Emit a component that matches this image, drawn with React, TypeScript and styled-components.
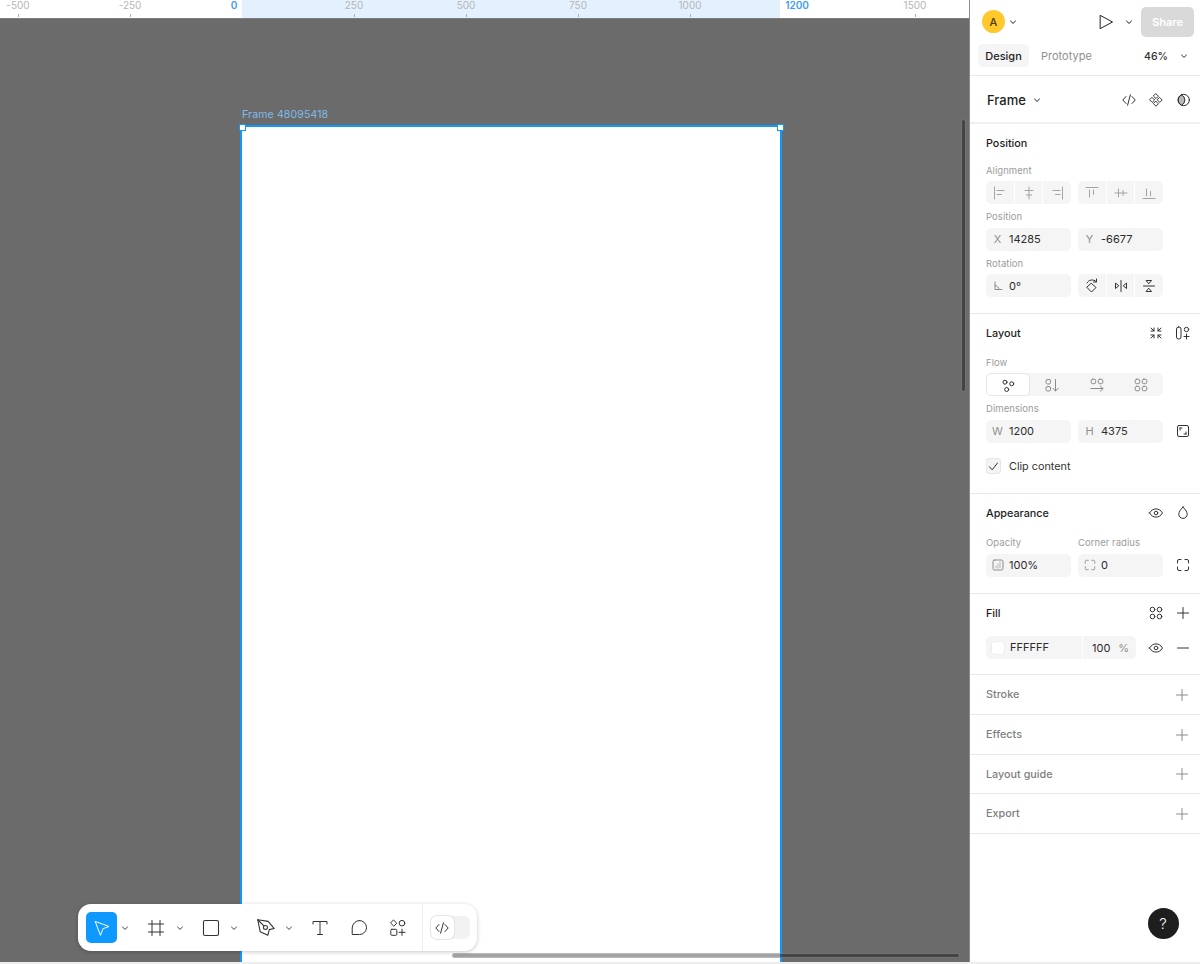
import type { ReactNode } from "react";
import styled, { createGlobalStyle } from "styled-components";

const GlobalStyle = createGlobalStyle`
  html, body {
    margin: 0;
    padding: 0;
    background: #eeeeee;
    font-family: Inter, "Liberation Sans", sans-serif;
    overflow: hidden;
  }
  * {
    box-sizing: border-box;
  }
`;

const Shell = styled.div`
  width: 1200px;
  height: 964px;
  display: flex;
  flex-direction: column;
  background: #eeeeee;
`;

const Main = styled.div`
  position: relative;
  flex: none;
  height: 962px;
  display: flex;
`;

const Workspace = styled.div`
  width: 970px;
  display: flex;
  flex-direction: column;
  border-right: 1px solid #8c8c8c;
`;

const Ruler = styled.div`
  position: relative;
  flex: none;
  height: 18px;
  background: #ffffff;
`;

const RulerBand = styled.div`
  position: absolute;
  left: 242px;
  top: 0;
  bottom: 0;
  width: 538px;
  background: #e3f1fe;
`;

const RulerLabel = styled.span<{ $x: number; $active?: boolean }>`
  position: absolute;
  left: ${(p) => p.$x}px;
  top: 0;
  transform: translateX(-50%);
  font-size: 10px;
  line-height: 11px;
  font-weight: ${(p) => (p.$active ? 600 : 400)};
  color: ${(p) => (p.$active ? "#3d9df0" : "#b5b5b5")};
`;

const RulerTick = styled.i<{ $x: number }>`
  position: absolute;
  left: ${(p) => p.$x}px;
  top: 14px;
  width: 1px;
  height: 3px;
  background: #b0b0b0;
`;

const Canvas = styled.div`
  position: relative;
  flex: 1;
  overflow: hidden;
  background: #6b6b6b;
  box-shadow: inset 0 1px 0 #7d7d7d;
`;

const FrameName = styled.div`
  position: absolute;
  left: 242px;
  top: 90px;
  font-size: 10.5px;
  line-height: 14px;
  letter-spacing: 0.15px;
  color: #7fbcec;
`;

const FrameBox = styled.div`
  position: absolute;
  left: 240px;
  top: 107px;
  width: 542px;
  height: 900px;
  background: #ffffff;
  border: 2px solid #0d99ff;
`;

const Handle = styled.i<{ $right?: boolean }>`
  position: absolute;
  top: -3px;
  ${(p) => (p.$right ? "right: -4px;" : "left: -3px;")}
  width: 7px;
  height: 7px;
  background: #ffffff;
  border: 1px solid #0d99ff;
`;

const ScrollV = styled.div`
  position: absolute;
  left: 961px;
  top: 101px;
  width: 5px;
  height: 273px;
  border-radius: 3px;
  background: rgba(0, 0, 0, 0.36);
  border: 1px solid rgba(255, 255, 255, 0.25);
`;

const ScrollH = styled.div`
  position: absolute;
  left: 452px;
  top: 935px;
  width: 508px;
  height: 5px;
  border-radius: 3px;
  background: rgba(0, 0, 0, 0.36);
  border: 1px solid rgba(255, 255, 255, 0.25);
`;

const Toolbar = styled.div`
  position: absolute;
  left: 78px;
  top: 886px;
  width: 399px;
  height: 47px;
  display: flex;
  align-items: center;
  padding-left: 8px;
  background: #ffffff;
  border-radius: 13px;
  box-shadow: 0 1px 4px rgba(0, 0, 0, 0.22);
`;

const ToolButton = styled.div<{ $active?: boolean }>`
  flex: none;
  width: 31px;
  height: 31px;
  display: flex;
  align-items: center;
  justify-content: center;
  border-radius: 5px;
  color: ${(p) => (p.$active ? "#ffffff" : "#333333")};
  background: ${(p) => (p.$active ? "#0d99ff" : "transparent")};
`;

const ToolCaret = styled.div`
  flex: none;
  width: 16px;
  margin-right: 7.7px;
  display: flex;
  justify-content: center;
  color: #444444;
`;

const ToolGap = styled.div`
  flex: none;
  width: 8px;
`;

const ToolDivider = styled.div`
  flex: none;
  align-self: stretch;
  width: 1px;
  margin: 0 8px;
  background: #ececec;
`;

const CodeToggle = styled.div`
  flex: none;
  width: 39px;
  height: 23px;
  border-radius: 6px;
  background: #f2f2f2;
`;

const CodeKnob = styled.div`
  width: 23px;
  height: 23px;
  display: flex;
  align-items: center;
  justify-content: center;
  border-radius: 6px;
  background: #ffffff;
  color: #333333;
  box-shadow: 0 0 0 1px #e4e4e4;
`;

const Panel = styled.aside`
  width: 230px;
  display: flex;
  flex-direction: column;
  background: #ffffff;
  color: #1e1e1e;
`;

const Header = styled.div`
  flex: none;
  height: 76px;
  padding: 6px 6px 0 8px;
  border-bottom: 1px solid #e9e9e9;
`;

const HeaderTop = styled.div`
  height: 31px;
  display: flex;
  align-items: center;
`;

const Avatar = styled.div`
  width: 23px;
  height: 23px;
  margin-left: 4px;
  display: flex;
  align-items: center;
  justify-content: center;
  border-radius: 50%;
  background: #ffc82c;
  font-size: 11px;
  font-weight: 500;
  color: #4a3c08;
`;

const AvatarCaret = styled.div`
  margin-left: 4px;
  display: flex;
`;

const PlayGroup = styled.div`
  margin-left: auto;
  display: flex;
  align-items: center;
  gap: 11px;
  margin-right: 8px;
`;

const ShareButton = styled.div`
  width: 53px;
  height: 30px;
  display: flex;
  align-items: center;
  justify-content: center;
  border-radius: 5px;
  background: #d9d9d9;
  color: #ffffff;
  font-size: 11px;
  font-weight: 600;
`;

const TabRow = styled.div`
  height: 23px;
  margin-top: 7px;
  display: flex;
  align-items: center;
  font-size: 11px;
`;

const Tab = styled.div<{ $active?: boolean }>`
  height: 23px;
  width: ${(p) => (p.$active ? "51px" : "auto")};
  margin-left: ${(p) => (p.$active ? "0" : "12px")};
  display: flex;
  align-items: center;
  justify-content: center;
  border-radius: 5px;
  font-weight: ${(p) => (p.$active ? 500 : 400)};
  color: ${(p) => (p.$active ? "#1e1e1e" : "#8f8f8f")};
  background: ${(p) => (p.$active ? "#f5f5f5" : "transparent")};
`;

const Zoom = styled.div`
  margin-left: auto;
  display: flex;
  align-items: center;
  gap: 12px;
  margin-right: 6px;
  font-size: 10.5px;
  line-height: 15px;
  padding-top: 1px;
  font-weight: 500;
  color: #333333;
`;

const Section = styled.section<{ $h: number; $thick?: boolean }>`
  flex: none;
  height: ${(p) => p.$h}px;
  padding: 0 9px 0 16px;
  border-bottom: ${(p) => (p.$thick ? "2px solid #f0f0f0" : "1px solid #e9e9e9")};
`;

const FrameHead = styled.div`
  height: 47px;
  display: flex;
  align-items: center;
  font-size: 13px;
  font-weight: 500;
  padding-left: 1px;
`;

const FrameCaret = styled.div`
  margin-left: 7px;
  display: flex;
`;

const HeadIcons = styled.div`
  margin-left: auto;
  display: flex;
  align-items: center;
  gap: 11px;
  color: #333333;
`;

const SectionHead = styled.div<{ $h: number }>`
  height: ${(p) => p.$h}px;
  padding-top: 11px;
  display: flex;
  align-items: flex-start;
  justify-content: space-between;
  font-size: 10.8px;
  line-height: 17px;
  font-weight: 500;
`;

const HeadActions = styled.div`
  display: flex;
  align-items: center;
  gap: 11px;
  height: 16px;
  color: #333333;
`;

const FieldGrid = styled.div`
  display: grid;
  grid-template-columns: 85px 85px 21px;
  column-gap: 7px;
`;

const FieldLabel = styled.div<{ $col?: number }>`
  grid-column: ${(p) => p.$col ?? 1} / span ${(p) => (p.$col ? 1 : 3)};
  height: 23.5px;
  padding-top: 6px;
  font-size: 9.5px;
  line-height: 14px;
  letter-spacing: 0.05px;
  white-space: nowrap;
  color: #9b9b9b;
`;

const Field = styled.div`
  height: 23px;
  display: flex;
  align-items: center;
  border-radius: 5px;
  background: #f5f5f5;
  font-size: 11px;
  color: #2c2c2c;
`;

const FieldPrefix = styled.span`
  flex: none;
  width: 23px;
  display: flex;
  align-items: center;
  justify-content: center;
  font-size: 11px;
  color: #8f8f8f;
`;

const ButtonGroup = styled.div`
  height: 23px;
  display: flex;
  gap: 1px;
  border-radius: 5px;
  overflow: hidden;
`;

const GroupCell = styled.div<{ $dim?: boolean }>`
  flex: 1;
  display: flex;
  align-items: center;
  justify-content: center;
  background: #f5f5f5;
  color: ${(p) => (p.$dim ? "#a3a3a3" : "#333333")};
`;

const Flow = styled.div`
  grid-column: 1 / span 2;
  height: 23px;
  display: grid;
  grid-template-columns: repeat(4, 1fr);
  border-radius: 5px;
  background: #f5f5f5;
`;

const FlowCell = styled.div<{ $active?: boolean }>`
  display: flex;
  align-items: center;
  justify-content: center;
  border-radius: 5px;
  color: ${(p) => (p.$active ? "#333333" : "#8a8a8a")};
  background: ${(p) => (p.$active ? "#ffffff" : "transparent")};
  box-shadow: ${(p) => (p.$active ? "inset 0 0 0 1px #e6e6e6" : "none")};
`;

const SideIcon = styled.div`
  height: 23px;
  padding-right: 1px;
  display: flex;
  align-items: center;
  justify-content: flex-end;
  color: #333333;
`;

const CheckRow = styled.div`
  margin-top: 15.5px;
  display: flex;
  align-items: center;
  gap: 8px;
  font-size: 10.8px;
  color: #333333;
`;

const CheckBox = styled.div`
  width: 15px;
  height: 16px;
  display: flex;
  align-items: center;
  justify-content: center;
  border-radius: 4px;
  background: #f5f5f5;
  box-shadow: inset 0 0 0 1px #e6e6e6;
  color: #333333;
`;

const FillGrid = styled.div`
  display: grid;
  grid-template-columns: 150px 16px 16px;
  column-gap: 11.5px;
  align-items: center;
  margin-top: 8.5px;
`;

const Swatch = styled.i`
  flex: none;
  width: 12px;
  height: 12px;
  margin: 0 6px;
  border-radius: 2px;
  background: #ffffff;
  box-shadow: 0 0 0 0.5px #e6e6e6;
`;

const FillHex = styled.span`
  width: 73px;
  height: 23px;
  line-height: 23px;
  border-right: 1px solid #ffffff;
`;

const FillAlpha = styled.span`
  margin-left: 9px;
`;

const FillUnit = styled.span`
  margin-left: auto;
  margin-right: 7px;
  color: #8f8f8f;
`;

const FillAction = styled.div`
  display: flex;
  justify-content: center;
  color: #333333;
`;

const CollapsedRow = styled.section<{ $h: number }>`
  flex: none;
  height: ${(p) => p.$h}px;
  padding: 0 10px 0 16px;
  display: flex;
  align-items: center;
  justify-content: space-between;
  border-bottom: 1px solid #e9e9e9;
  font-size: 10.8px;
  font-weight: 500;
  color: #808080;
`;

const HelpButton = styled.div`
  position: absolute;
  left: 1147.5px;
  top: 907.5px;
  width: 31px;
  height: 31px;
  display: flex;
  align-items: center;
  justify-content: center;
  border-radius: 50%;
  background: #1e1e1e;
  color: #ffffff;
  font-size: 15px;
  font-weight: 300;
`;

type IconProps = { size?: number; vb?: number; children: ReactNode; sw?: number };

const Icon = ({ size = 16, vb = 16, sw = 1, children }: IconProps) => (
  <svg
    width={size}
    height={size}
    viewBox={`0 0 ${vb} ${vb}`}
    fill="none"
    stroke="currentColor"
    strokeWidth={sw}
    strokeLinecap="round"
    strokeLinejoin="round"
  >
    {children}
  </svg>
);

const Caret = () => (
  <Icon size={8} vb={8}>
    <path d="M1.5 3l2.5 2.4L6.5 3" />
  </Icon>
);

const CodeGlyph = () => (
  <Icon size={16}>
    <path d="M5 4.5L1.8 8 5 11.5M11 4.5L14.2 8 11 11.5M9.4 2.8L6.6 13.2" />
  </Icon>
);

const Plus = ({ gray }: { gray?: boolean }) => (
  <Icon size={16}>
    <path d="M8 2.5v11M2.5 8h11" stroke={gray ? "#8a8a8a" : "currentColor"} />
  </Icon>
);

const Eye = () => (
  <Icon size={16}>
    <path d="M1.5 8C3.2 5.2 5.4 3.9 8 3.9s4.8 1.3 6.5 4.1c-1.7 2.8-3.9 4.1-6.5 4.1S3.2 10.8 1.5 8z" />
    <circle cx="8" cy="8" r="1.8" />
  </Icon>
);

const cornersPath =
  "M1.5 5V3a1.5 1.5 0 0 1 1.5-1.5h2M9 1.5h2A1.5 1.5 0 0 1 12.5 3v2M12.5 9v2a1.5 1.5 0 0 1-1.5 1.5H9M5 12.5H3A1.5 1.5 0 0 1 1.5 11V9";

const FourDots = () => (
  <Icon size={16}>
    <circle cx="4.5" cy="4.5" r="2.3" />
    <circle cx="11.5" cy="4.5" r="2.3" />
    <circle cx="4.5" cy="11.5" r="2.3" />
    <circle cx="11.5" cy="11.5" r="2.3" />
  </Icon>
);

const rulerLabels = [
  { x: 18, text: "-500" },
  { x: 130, text: "-250" },
  { x: 234, text: "0", active: true },
  { x: 354, text: "250" },
  { x: 466, text: "500" },
  { x: 578, text: "750" },
  { x: 690, text: "1000" },
  { x: 797, text: "1200", active: true },
  { x: 915, text: "1500" },
];

const rulerTicks = [18, 130, 354, 466, 578, 690, 915];

const App = () => (
  <Shell>
    <GlobalStyle />
    <Main>
      <Workspace>
        <Ruler>
          <RulerBand />
          {rulerLabels.map((l) => (
            <RulerLabel key={l.text} $x={l.x} $active={l.active}>
              {l.text}
            </RulerLabel>
          ))}
          {rulerTicks.map((x) => (
            <RulerTick key={x} $x={x} />
          ))}
        </Ruler>
        <Canvas>
          <FrameName>Frame 48095418</FrameName>
          <FrameBox>
            <Handle />
            <Handle $right />
          </FrameBox>
          <ScrollV />
          <ScrollH />
          <Toolbar>
            <ToolButton $active>
              <Icon size={20} vb={20}>
                <path d="M3.5 3.5l13.5 5-6 2.2-2.4 6.3z" />
              </Icon>
            </ToolButton>
            <ToolCaret>
              <Caret />
            </ToolCaret>
            <ToolButton>
              <Icon size={18} vb={18}>
                <path d="M5 1.5v15M13 1.5v15M1.5 5h15M1.5 13h15" />
              </Icon>
            </ToolButton>
            <ToolCaret>
              <Caret />
            </ToolCaret>
            <ToolButton>
              <Icon size={18} vb={18} sw={1.1}>
                <rect x="1.5" y="1.5" width="15" height="15" rx="1.5" />
              </Icon>
            </ToolButton>
            <ToolCaret>
              <Caret />
            </ToolCaret>
            <ToolButton>
              <Icon size={22} vb={20}>
                <path d="M2.5 2.5l9.5 1.5 5.5 6.5-4.5 1-1.3 5-7-3.2z" />
                <circle cx="9.5" cy="9.5" r="1.8" />
                <path d="M2.5 2.5l5.6 5.6" />
              </Icon>
            </ToolButton>
            <ToolCaret>
              <Caret />
            </ToolCaret>
            <ToolButton>
              <Icon size={18} vb={18}>
                <path d="M2 5V2.5h14V5M9 2.5v13M6.5 15.5h5" />
              </Icon>
            </ToolButton>
            <ToolGap />
            <ToolButton>
              <Icon size={18} vb={18}>
                <path d="M9.5 1.5a7 7 0 0 1 0 14H2.2V9A7.5 7.5 0 0 1 9.5 1.5z" />
              </Icon>
            </ToolButton>
            <ToolGap />
            <ToolButton>
              <Icon size={18} vb={18}>
                <path d="M4.8 1.2l3 3-3 3-3-3z" />
                <circle cx="13" cy="4.2" r="2.8" />
                <rect x="1.8" y="10.3" width="6" height="6" rx="1" />
                <path d="M13 10.2v6.2M9.9 13.3h6.2" />
              </Icon>
            </ToolButton>
            <ToolDivider />
            <CodeToggle>
              <CodeKnob>
                <CodeGlyph />
              </CodeKnob>
            </CodeToggle>
          </Toolbar>
        </Canvas>
      </Workspace>

      <Panel>
        <Header>
          <HeaderTop>
            <Avatar>A</Avatar>
            <AvatarCaret>
              <Caret />
            </AvatarCaret>
            <PlayGroup>
              <Icon size={16}>
                <path d="M2.5 1.5L14.5 8 2.5 14.5z" />
              </Icon>
              <Caret />
            </PlayGroup>
            <ShareButton>Share</ShareButton>
          </HeaderTop>
          <TabRow>
            <Tab $active>Design</Tab>
            <Tab>Prototype</Tab>
            <Zoom>
              46%
              <Caret />
            </Zoom>
          </TabRow>
        </Header>

        <Section $h={48} $thick>
          <FrameHead>
            Frame
            <FrameCaret>
              <Caret />
            </FrameCaret>
            <HeadIcons>
              <CodeGlyph />
              <Icon size={16}>
                <path d="M8 1.8l2.4 2.4L8 6.6 5.6 4.2zM8 9.4l2.4 2.4L8 14.2l-2.4-2.4zM4.2 5.6L6.6 8l-2.4 2.4L1.8 8zM11.8 5.6L14.2 8l-2.4 2.4L9.4 8z" />
              </Icon>
              <Icon size={16}>
                <circle cx="8.7" cy="8" r="5.7" />
                <path
                  d="M6.5 2.8A5.7 5.7 0 0 0 6.5 13.2 5.7 5.7 0 0 0 6.5 2.8z"
                  fill="currentColor"
                  fillOpacity="0.35"
                />
              </Icon>
            </HeadIcons>
          </FrameHead>
        </Section>

        <Section $h={190}>
          <SectionHead $h={33.5}>Position</SectionHead>
          <FieldGrid>
            <FieldLabel>Alignment</FieldLabel>
            <ButtonGroup>
              <GroupCell $dim>
                <Icon size={14} vb={14}>
                  <path d="M1.5 1v12M4 4.5h7M4 8.5h4.5" />
                </Icon>
              </GroupCell>
              <GroupCell $dim>
                <Icon size={14} vb={14}>
                  <path d="M7 1v12M3 4.5h8M4.5 9h5" />
                </Icon>
              </GroupCell>
              <GroupCell $dim>
                <Icon size={14} vb={14}>
                  <path d="M12.5 1v12M3 4.5h7M5.5 8.5H10" />
                </Icon>
              </GroupCell>
            </ButtonGroup>
            <ButtonGroup>
              <GroupCell $dim>
                <Icon size={14} vb={14}>
                  <path d="M1 1.5h12M4.5 4v7M8.5 4v4.5" />
                </Icon>
              </GroupCell>
              <GroupCell $dim>
                <Icon size={14} vb={14}>
                  <path d="M1 7h12M4.5 3v8M9 4.5v5" />
                </Icon>
              </GroupCell>
              <GroupCell $dim>
                <Icon size={14} vb={14}>
                  <path d="M1 12.5h12M4.5 3v7M8.5 5.5V10" />
                </Icon>
              </GroupCell>
            </ButtonGroup>
            <span />
            <FieldLabel>Position</FieldLabel>
            <Field>
              <FieldPrefix>X</FieldPrefix>14285
            </Field>
            <Field>
              <FieldPrefix>Y</FieldPrefix>-6677
            </Field>
            <span />
            <FieldLabel>Rotation</FieldLabel>
            <Field>
              <FieldPrefix>
                <Icon size={10} vb={10}>
                  <path d="M2 1v7.5h7M2 4.5a4 4 0 0 1 4 4" stroke="#8a8a8a" />
                </Icon>
              </FieldPrefix>
              0°
            </Field>
            <ButtonGroup>
              <GroupCell>
                <Icon size={15} vb={15}>
                  <path d="M7.5 5.5l4.5 4-4.5 4.5L3 9.5zM3 5a5.5 5.5 0 0 1 9-1.5M12.5 1v3h-3" />
                </Icon>
              </GroupCell>
              <GroupCell>
                <Icon size={14} vb={14}>
                  <path d="M7 1.5v11M1.5 4.5v5l3-2.5zM12.5 4.5v5l-3-2.5z" />
                </Icon>
              </GroupCell>
              <GroupCell>
                <Icon size={14} vb={14}>
                  <path d="M1.5 7h11M4.5 1.5h5L7 4.5zM4.5 12.5h5L7 9.5z" />
                </Icon>
              </GroupCell>
            </ButtonGroup>
          </FieldGrid>
        </Section>

        <Section $h={180}>
          <SectionHead $h={35.5}>
            Layout
            <HeadActions>
              <Icon size={16}>
                <path d="M3 3l3 3M6 3v3H3M13 3l-3 3M10 3v3h3M3 13l3-3M6 13v-3H3M13 13l-3-3M10 13v-3h3" />
              </Icon>
              <Icon size={16}>
                <rect x="1.5" y="2" width="4.5" height="12" rx="2" />
                <circle cx="11.5" cy="4.5" r="2.2" />
                <path d="M11.5 9v5M9 11.5h5" />
              </Icon>
            </HeadActions>
          </SectionHead>
          <FieldGrid>
            <FieldLabel>Flow</FieldLabel>
            <Flow>
              <FlowCell $active>
                <Icon size={14} vb={14}>
                  <circle cx="4" cy="4.2" r="2" />
                  <circle cx="10.7" cy="5.8" r="2" />
                  <circle cx="5.7" cy="11.5" r="2" />
                </Icon>
              </FlowCell>
              <FlowCell>
                <Icon size={14} vb={14}>
                  <rect x="1" y="1.5" width="4.5" height="4.5" rx="1.5" />
                  <rect x="1" y="8.5" width="4.5" height="4.5" rx="1.5" />
                  <path d="M10.5 1.5v11.5M7.8 10.2l2.7 2.8 2.7-2.8" />
                </Icon>
              </FlowCell>
              <FlowCell>
                <Icon size={14} vb={14}>
                  <rect x="1.2" y="1.2" width="4.5" height="4.5" rx="1.5" />
                  <rect x="8.3" y="1.2" width="4.5" height="4.5" rx="1.5" />
                  <path d="M1 10.5h12M10.2 7.8l2.8 2.7-2.8 2.7" />
                </Icon>
              </FlowCell>
              <FlowCell>
                <Icon size={14} vb={14}>
                  <rect x="1.2" y="1.2" width="4.5" height="4.5" rx="1.5" />
                  <rect x="8.3" y="1.2" width="4.5" height="4.5" rx="1.5" />
                  <rect x="1.2" y="8.3" width="4.5" height="4.5" rx="1.5" />
                  <rect x="8.3" y="8.3" width="4.5" height="4.5" rx="1.5" />
                </Icon>
              </FlowCell>
            </Flow>
            <span />
            <FieldLabel>Dimensions</FieldLabel>
            <Field>
              <FieldPrefix>W</FieldPrefix>1200
            </Field>
            <Field>
              <FieldPrefix>H</FieldPrefix>4375
            </Field>
            <SideIcon>
              <Icon size={14} vb={14}>
                <rect x="1.5" y="1.5" width="11" height="11" rx="1.5" />
                <path d="M4 4h2M4 4v2M10 10H8M10 10V8" />
              </Icon>
            </SideIcon>
          </FieldGrid>
          <CheckRow>
            <CheckBox>
              <Icon size={11} vb={11}>
                <path d="M1.5 5.8L4.2 8.8 9.5 2" />
              </Icon>
            </CheckBox>
            Clip content
          </CheckRow>
        </Section>

        <Section $h={100}>
          <SectionHead $h={36}>
            Appearance
            <HeadActions>
              <Eye />
              <Icon size={16}>
                <path d="M8 2c2.6 2.8 4.2 5 4.2 7.2a4.2 4.2 0 0 1-8.4 0C3.8 7 5.4 4.8 8 2z" />
              </Icon>
            </HeadActions>
          </SectionHead>
          <FieldGrid>
            <FieldLabel $col={1}>Opacity</FieldLabel>
            <FieldLabel $col={2}>Corner radius</FieldLabel>
            <span />
            <Field>
              <FieldPrefix>
                <Icon size={12} vb={12}>
                  <rect x="1" y="1" width="10" height="10" rx="1.5" stroke="#8a8a8a" />
                  <path d="M4 9V7M6 9V5M8 9V3" stroke="#b5b5b5" />
                </Icon>
              </FieldPrefix>
              100%
            </Field>
            <Field>
              <FieldPrefix>
                <Icon size={12} vb={14}>
                  <path d={cornersPath} stroke="#8a8a8a" />
                </Icon>
              </FieldPrefix>
              0
            </Field>
            <SideIcon>
              <Icon size={14} vb={14}>
                <path d={cornersPath} />
              </Icon>
            </SideIcon>
          </FieldGrid>
        </Section>

        <Section $h={81}>
          <SectionHead $h={33.5}>
            Fill
            <HeadActions>
              <FourDots />
              <Plus />
            </HeadActions>
          </SectionHead>
          <FillGrid>
            <Field>
              <Swatch />
              <FillHex>FFFFFF</FillHex>
              <FillAlpha>100</FillAlpha>
              <FillUnit>%</FillUnit>
            </Field>
            <FillAction>
              <Eye />
            </FillAction>
            <FillAction>
              <Icon size={14} vb={14}>
                <path d="M1.5 7h11" />
              </Icon>
            </FillAction>
          </FillGrid>
        </Section>

        <CollapsedRow $h={40}>
          Stroke
          <Plus gray />
        </CollapsedRow>
        <CollapsedRow $h={40}>
          Effects
          <Plus gray />
        </CollapsedRow>
        <CollapsedRow $h={39}>
          Layout guide
          <Plus gray />
        </CollapsedRow>
        <CollapsedRow $h={40}>
          Export
          <Plus gray />
        </CollapsedRow>
      </Panel>
      <HelpButton>?</HelpButton>
    </Main>
  </Shell>
);

export default App;
